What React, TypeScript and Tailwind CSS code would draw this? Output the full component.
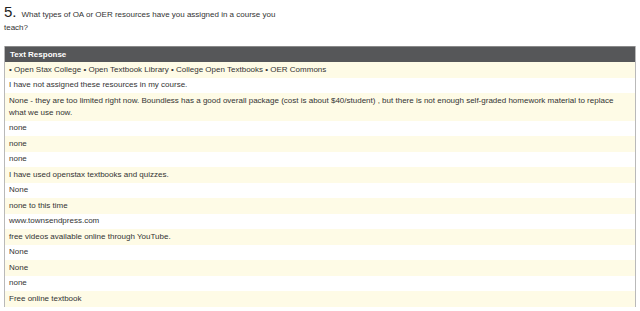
const responses: string[] = [
    '• Open Stax College • Open Textbook Library • College Open Textbooks • OER Commons',
    'I have not assigned these resources in my course.',
    'None - they are too limited right now. Boundless has a good overall package (cost is about $40/student) , but there is not enough self-graded homework material to replace what we use now.',
    'none',
    'none',
    'none',
    'I have used openstax textbooks and quizzes.',
    'None',
    'none to this time',
    'www.townsendpress.com',
    'free videos available online through YouTube.',
    'None',
    'None',
    'none',
    'Free online textbook',
];

export default function App() {
    return (
        <div className="h-[311px] w-[640px] overflow-hidden bg-white font-['Liberation_Sans',Arial,sans-serif] text-[#333]">
            <div className="w-[285px] pl-[4px] pt-[5px] text-[8px] leading-[13px]">
                <span className="mr-[5px] text-[15px] leading-[13px] text-[#222]">5.</span>
                What types of OA or OER resources have you assigned in a course you teach?
            </div>
            <div className="ml-[4px] mt-[12px] w-[632px] border-x border-[#b9b9b9]">
                <div className="border-t border-[#8a8a8a] bg-[#565759] px-[5px] py-[2.5px] text-[8px] font-bold leading-[10px] text-white">
                    Text Response
                </div>
                {responses.map((text, i) => (
                    <div
                        key={i}
                        className={
                            (i % 2 === 0 ? 'bg-[#fefbe6]' : 'bg-white') +
                            ' py-[1.75px] pl-[4px] pr-[18px] text-[8px] leading-[12px]'
                        }
                    >
                        {text}
                    </div>
                ))}
            </div>
        </div>
    );
}
